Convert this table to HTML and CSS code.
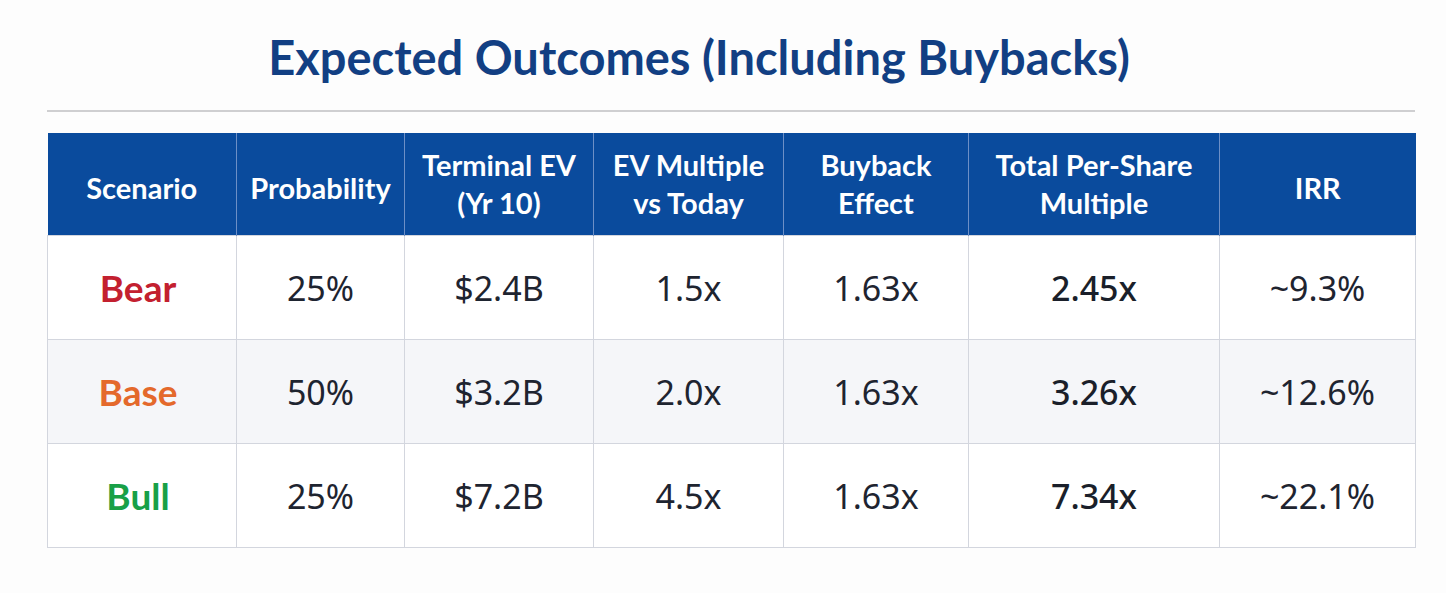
FILE: index.html
```html
<!DOCTYPE html>
<html>
<head>
<meta charset="utf-8">
<link rel="stylesheet" href="styles.css">
</head>
<body>
<div class="page">
  <h1 class="title">Expected Outcomes (Including Buybacks)</h1>
  <div class="rule"></div>
  <table class="grid">
    <colgroup>
      <col class="c1"><col class="c2"><col class="c3"><col class="c4"><col class="c5"><col class="c6"><col class="c7">
    </colgroup>
    <thead>
      <tr>
        <th class="one">Scenario</th>
        <th class="one">Probability</th>
        <th>Terminal EV<br>(Yr 10)</th>
        <th>EV Multiple<br>vs Today</th>
        <th>Buyback<br>Effect</th>
        <th>Total Per-Share<br>Multiple</th>
        <th class="one">IRR</th>
      </tr>
    </thead>
    <tbody>
      <tr>
        <td class="name bear">Bear</td>
        <td>25%</td>
        <td>$2.4B</td>
        <td>1.5x</td>
        <td>1.63x</td>
        <td class="total">2.45x</td>
        <td>~9.3%</td>
      </tr>
      <tr class="alt">
        <td class="name base">Base</td>
        <td>50%</td>
        <td>$3.2B</td>
        <td>2.0x</td>
        <td>1.63x</td>
        <td class="total">3.26x</td>
        <td>~12.6%</td>
      </tr>
      <tr>
        <td class="name bull">Bull</td>
        <td>25%</td>
        <td>$7.2B</td>
        <td>4.5x</td>
        <td>1.63x</td>
        <td class="total">7.34x</td>
        <td>~22.1%</td>
      </tr>
    </tbody>
  </table>
</div>
</body>
</html>
```

FILE: styles.css
```css
html, body {
  margin: 0;
  padding: 0;
  background: #fdfdfd;
}

.page {
  width: 1368px;
  margin-left: 47px;
  padding-top: 27px;
  display: flex;
  flex-direction: column;
  align-items: stretch;
}

.title {
  margin: 0;
  padding-right: 64px;
  text-align: center;
  font-family: Lato, "Liberation Sans", sans-serif;
  font-weight: 700;
  font-size: 47px;
  line-height: 60px;
  color: #123f83;
  letter-spacing: 0;
}

.rule {
  margin-top: 23px;
  height: 2px;
  background: #cfcfd1;
}

.grid {
  margin-top: 21px;
  width: 1368px;
  border-collapse: collapse;
  table-layout: fixed;
}

.c1 { width: 189px; }
.c2 { width: 168px; }
.c3 { width: 189px; }
.c4 { width: 190px; }
.c5 { width: 185px; }
.c6 { width: 251px; }
.c7 { width: 196px; }

.grid th {
  height: 102px;
  padding: 0;
  background: #0a4b9d;
  color: #ffffff;
  font-family: Lato, "Liberation Sans", sans-serif;
  font-weight: 700;
  font-size: 29px;
  line-height: 38px;
  text-align: center;
  vertical-align: middle;
  border-left: 1.5px solid #6d8fc6;
}

.grid th.one {
  height: 94px;
  padding-top: 8px;
}

.grid th:first-child {
  border-left: none;
}

.grid td {
  height: 103px;
  padding: 0;
  text-align: center;
  vertical-align: middle;
  font-family: "Noto Sans", "Open Sans", sans-serif;
  font-size: 34px;
  color: #1e2430;
  border: 1.5px solid #d3d6de;
  background: #ffffff;
}

.grid tr.alt td {
  background: #f5f6f9;
}

.grid td.total {
  font-weight: 500;
  color: #1a1f2a;
}

.grid td.name {
  font-family: Lato, "Liberation Sans", sans-serif;
  font-weight: 700;
  font-size: 37px;
  padding-right: 8px;
}

.bear { color: #c3202f !important; }
.base { color: #e4692c !important; }
.bull { color: #18a047 !important; }
```
